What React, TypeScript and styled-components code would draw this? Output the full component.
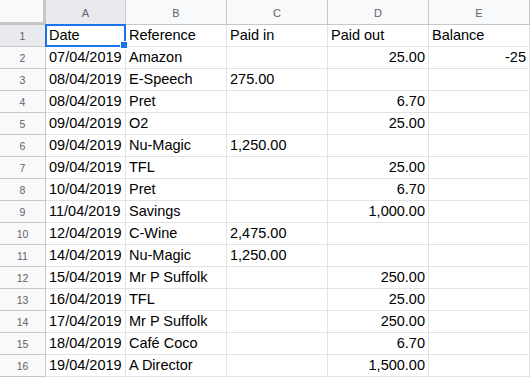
import React from "react";
import styled, { createGlobalStyle, css } from "styled-components";

const Global = createGlobalStyle`
  html, body { margin: 0; padding: 0; background: #fff; overflow: hidden; }
  body { font-family: "Liberation Sans", Arial, sans-serif; }
`;

const Grid = styled.div`
  display: grid;
  grid-template-columns: 46px 80px 101px 101px 101px 101px;
  grid-template-rows: 25px repeat(16, 22px);
  width: 530px;
`;

const Corner = styled.div`
  background: #f8f9fa;
  border-right: 3px solid #c4c7c5;
  border-bottom: 3px solid #c4c7c5;
  box-sizing: border-box;
`;

const ColHead = styled.div<{ $active?: boolean }>`
  background: ${(p) => (p.$active ? "#e8eaed" : "#f8f9fa")};
  border-right: 1px solid #c7c7c7;
  border-bottom: 1px solid #c7c7c7;
  box-sizing: border-box;
  display: flex;
  align-items: center;
  justify-content: center;
  font-size: 11px;
  color: #5f6368;
  padding-top: 1px;
`;

const RowHead = styled.div<{ $active?: boolean }>`
  background: ${(p) => (p.$active ? "#e8eaed" : "#f8f9fa")};
  border-right: 1px solid #c7c7c7;
  border-bottom: 1px solid #c7c7c7;
  box-sizing: border-box;
  display: flex;
  align-items: center;
  justify-content: center;
  font-size: 10.5px;
  color: #5f6368;
`;

const Cell = styled.div<{ $right?: boolean; $selected?: boolean }>`
  position: relative;
  border-right: 1px solid #e2e2e2;
  border-bottom: 1px solid #e2e2e2;
  box-sizing: border-box;
  display: flex;
  align-items: flex-end;
  padding: 0 3px 2px 3px;
  font-size: 14.5px;
  line-height: 17px;
  color: #000;
  white-space: nowrap;
  overflow: visible;
  justify-content: ${(p) => (p.$right ? "flex-end" : "flex-start")};
  ${(p) =>
    p.$selected &&
    css`
      z-index: 2;
    `}
`;

const Selection = styled.div`
  position: absolute;
  left: -1px;
  top: -1px;
  right: -1px;
  bottom: -1px;
  border: 2px solid #1a73e8;
  pointer-events: none;
`;

const Handle = styled.div`
  position: absolute;
  right: -4px;
  bottom: -4px;
  width: 6px;
  height: 6px;
  background: #1a73e8;
  border: 1px solid #fff;
`;

type Row = [string, string, string, string, string];

const rows: Row[] = [
  ["Date", "Reference", "Paid in", "Paid out", "Balance"],
  ["07/04/2019", "Amazon", "", "25.00", "-25"],
  ["08/04/2019", "E-Speech", "275.00", "", ""],
  ["08/04/2019", "Pret", "", "6.70", ""],
  ["09/04/2019", "O2", "", "25.00", ""],
  ["09/04/2019", "Nu-Magic", "1,250.00", "", ""],
  ["09/04/2019", "TFL", "", "25.00", ""],
  ["10/04/2019", "Pret", "", "6.70", ""],
  ["11/04/2019", "Savings", "", "1,000.00", ""],
  ["12/04/2019", "C-Wine", "2,475.00", "", ""],
  ["14/04/2019", "Nu-Magic", "1,250.00", "", ""],
  ["15/04/2019", "Mr P Suffolk", "", "250.00", ""],
  ["16/04/2019", "TFL", "", "25.00", ""],
  ["17/04/2019", "Mr P Suffolk", "", "250.00", ""],
  ["18/04/2019", "Café Coco", "", "6.70", ""],
  ["19/04/2019", "A Director", "", "1,500.00", ""],
];

const letters = ["A", "B", "C", "D", "E"];

export default function App() {
  return (
    <>
      <Global />
      <Grid>
        <Corner />
        {letters.map((l, i) => (
          <ColHead key={l} $active={i === 0}>
            {l}
          </ColHead>
        ))}
        {rows.map((r, ri) => (
          <React.Fragment key={ri}>
            <RowHead $active={ri === 0}>{ri + 1}</RowHead>
            {r.map((v, ci) => {
              const right = ri > 0 && ci >= 3;
              const sel = ri === 0 && ci === 0;
              return (
                <Cell key={ci} $right={right} $selected={sel}>
                  {v}
                  {sel && (
                    <Selection>
                      <Handle />
                    </Selection>
                  )}
                </Cell>
              );
            })}
          </React.Fragment>
        ))}
      </Grid>
    </>
  );
}
